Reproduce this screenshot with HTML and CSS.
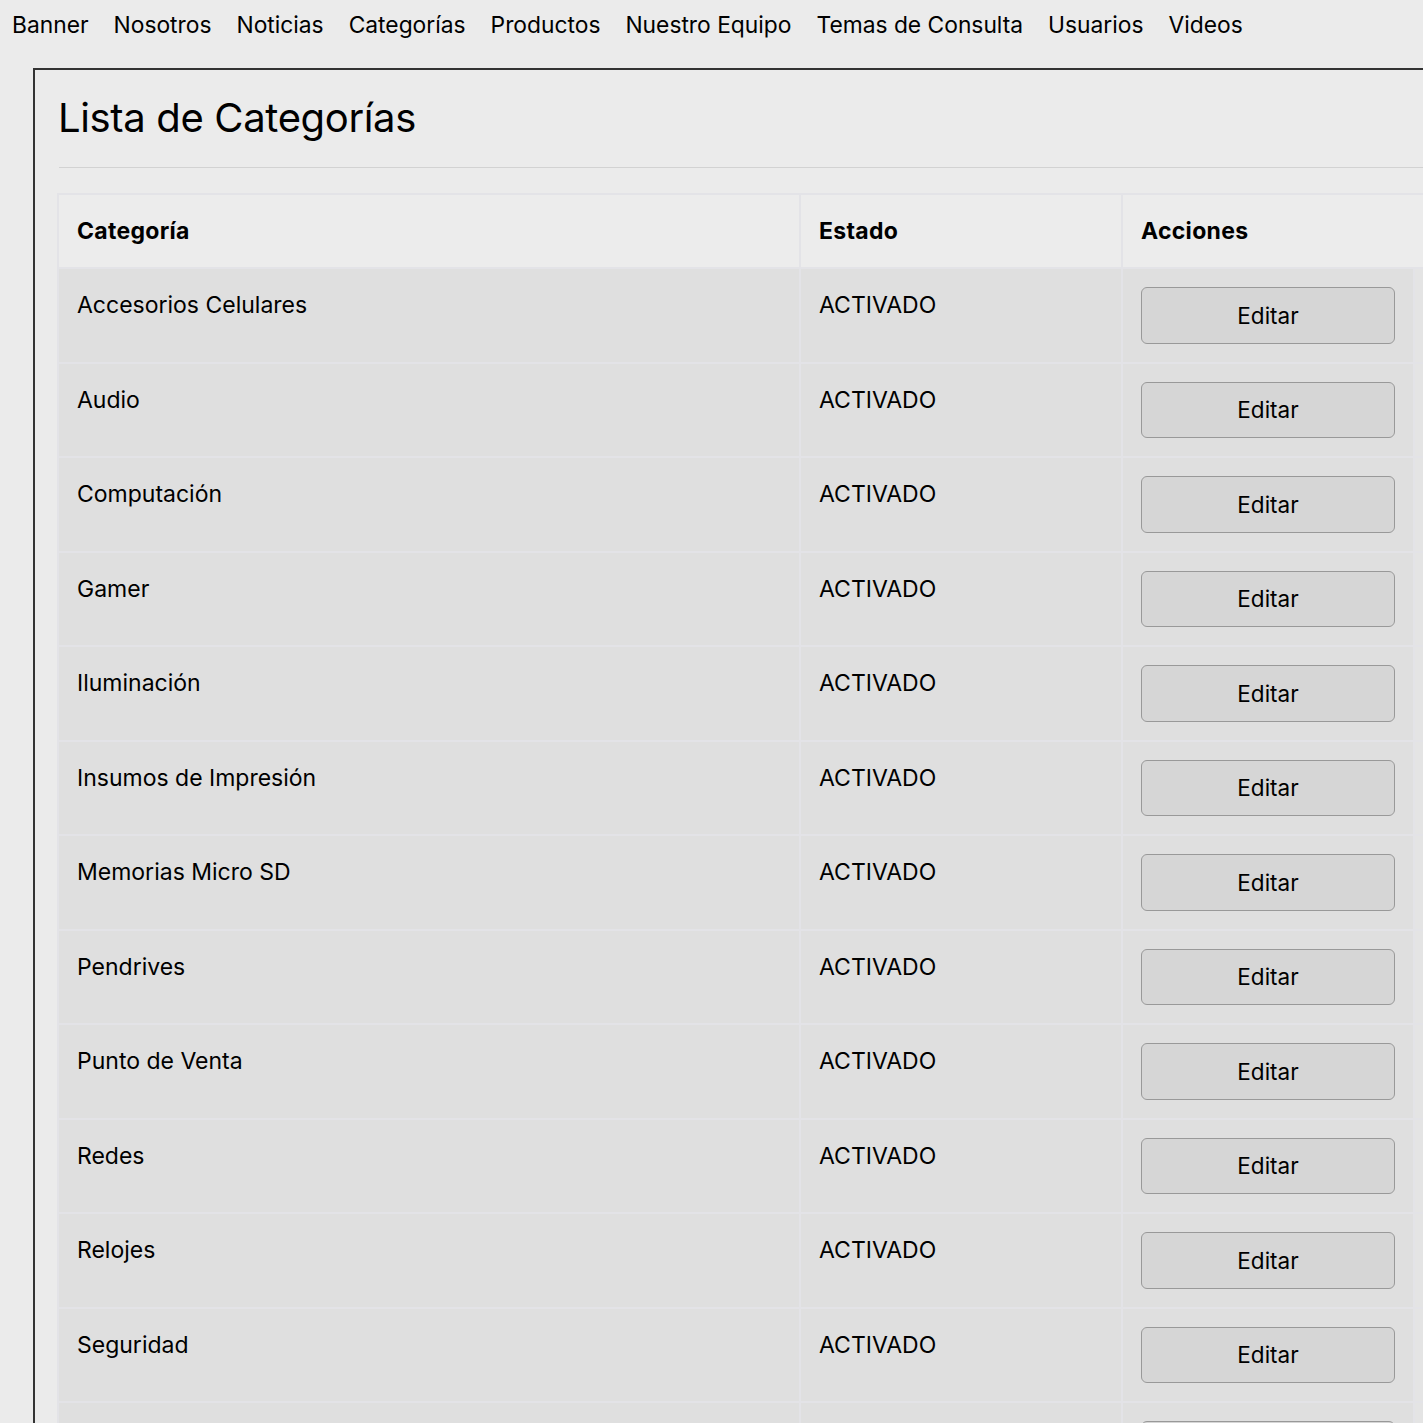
FILE: index.html
```html
<!DOCTYPE html>
<html lang="es">
<head>
<meta charset="utf-8">
<title>Lista de Categorías</title>
<link rel="stylesheet" href="styles.css">
</head>
<body>
<nav class="topnav">
  <a href="#">Banner</a>
  <a href="#">Nosotros</a>
  <a href="#">Noticias</a>
  <a href="#">Categorías</a>
  <a href="#">Productos</a>
  <a href="#">Nuestro Equipo</a>
  <a href="#">Temas de Consulta</a>
  <a href="#">Usuarios</a>
  <a href="#">Videos</a>
</nav>
<main class="panel">
  <h1 class="title">Lista de Categorías</h1>
  <hr class="divider">
  <table class="grid">
    <colgroup>
      <col class="col-name">
      <col class="col-state">
      <col class="col-actions">
      <col class="col-extra">
    </colgroup>
    <thead>
      <tr>
        <th>Categoría</th>
        <th>Estado</th>
        <th colspan="2">Acciones</th>
      </tr>
    </thead>
    <tbody>
      <tr><td>Accesorios Celulares</td><td>ACTIVADO</td><td><button class="btn">Editar</button></td><td class="extra"></td></tr>
      <tr><td>Audio</td><td>ACTIVADO</td><td><button class="btn">Editar</button></td><td class="extra"></td></tr>
      <tr><td>Computación</td><td>ACTIVADO</td><td><button class="btn">Editar</button></td><td class="extra"></td></tr>
      <tr><td>Gamer</td><td>ACTIVADO</td><td><button class="btn">Editar</button></td><td class="extra"></td></tr>
      <tr><td>Iluminación</td><td>ACTIVADO</td><td><button class="btn">Editar</button></td><td class="extra"></td></tr>
      <tr><td>Insumos de Impresión</td><td>ACTIVADO</td><td><button class="btn">Editar</button></td><td class="extra"></td></tr>
      <tr><td>Memorias Micro SD</td><td>ACTIVADO</td><td><button class="btn">Editar</button></td><td class="extra"></td></tr>
      <tr><td>Pendrives</td><td>ACTIVADO</td><td><button class="btn">Editar</button></td><td class="extra"></td></tr>
      <tr><td>Punto de Venta</td><td>ACTIVADO</td><td><button class="btn">Editar</button></td><td class="extra"></td></tr>
      <tr><td>Redes</td><td>ACTIVADO</td><td><button class="btn">Editar</button></td><td class="extra"></td></tr>
      <tr><td>Relojes</td><td>ACTIVADO</td><td><button class="btn">Editar</button></td><td class="extra"></td></tr>
      <tr><td>Seguridad</td><td>ACTIVADO</td><td><button class="btn">Editar</button></td><td class="extra"></td></tr>
      <tr><td>Software</td><td>ACTIVADO</td><td><button class="btn">Editar</button></td><td class="extra"></td></tr>
    </tbody>
  </table>
</main>
</body>
</html>
```

FILE: styles.css
```css
html {
  overflow: hidden;
}
body {
  margin: 8px -120px 8px 8px;
  background: #ebebeb;
  color: #000;
  font-family: Inter, "Noto Sans", "Liberation Sans", sans-serif;
  font-size: 23px;
}
.topnav {
  display: flex;
  gap: 25px;
  padding-left: 4px;
  line-height: 34px;
  font-size: 22.8px;
  white-space: nowrap;
}
.topnav a {
  color: #000;
  text-decoration: none;
}
.panel {
  display: block;
  margin: 26px 0 0 25px;
  border: 2px solid #333;
  border-right: none;
  padding: 0 0 0 24px;
}
.title {
  margin: 23px 0 0 -1px;
  font-size: 40px;
  font-weight: 400;
  line-height: 49px;
  letter-spacing: -0.35px;
}
.divider {
  margin: 25px 0 25px;
  border: none;
  border-top: 1.5px solid #d2d2d2;
  height: 0;
}
.grid {
  border-collapse: separate;
  border-spacing: 2px;
  background: #e3e3e7;
  margin-left: -2px;
  table-layout: fixed;
  width: 1560px;
  max-width: none;
}
.col-name { width: 740px; }
.col-state { width: 320px; }
.col-actions { width: 290px; }
.col-extra { width: 200px; }
.grid th, .grid td {
  padding: 18px;
  line-height: 36px;
  text-align: left;
  vertical-align: top;
}
.grid th {
  background: #ececec;
  font-weight: 700;
  letter-spacing: 0.3px;
}
.grid td {
  background: #dfdfdf;
}
.grid td.extra {
  background: #e4e4e4;
  padding: 0;
}
.btn {
  display: block;
  width: 254px;
  height: 56.5px;
  margin: 0;
  padding: 0;
  background: #d6d6d6;
  border: 1.5px solid #999;
  border-radius: 6px;
  font-family: inherit;
  font-size: 22.5px;
  color: #000;
}
```
